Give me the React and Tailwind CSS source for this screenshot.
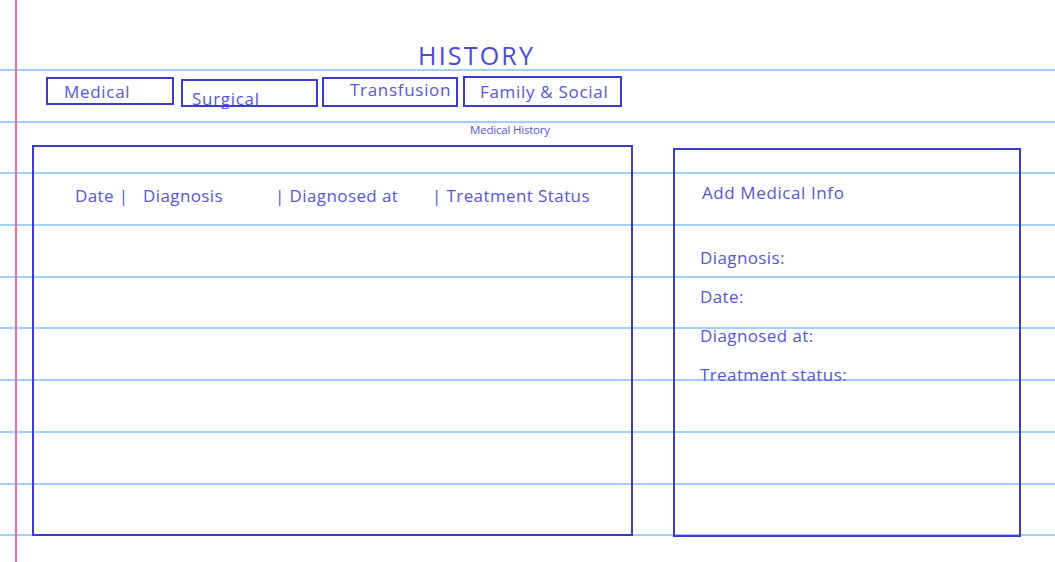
const tabs = [
  { label: "Medical", box: "ml-[46px] mt-[1px] w-[128px] h-[28px]", text: "pl-[16px] pt-[2px]" },
  { label: "Surgical", box: "ml-[7px] mt-[3px] w-[137px] h-[28px]", text: "pl-[9px] pt-[7px]" },
  { label: "Transfusion", box: "ml-[4px] mt-[1px] w-[136px] h-[30px]", text: "pl-[26px] pt-0" },
  { label: "Family & Social", box: "ml-[5px] mt-0 w-[159px] h-[31px]", text: "pl-[15px] pt-[3px]" },
];

const fields = ["Diagnosis:", "Date:", "Diagnosed at:", "Treatment status:"];

function RuledPaper() {
  // notebook lines behind the page content
  return (
    <div className="absolute inset-0 pointer-events-none">
      <div className="flex flex-col pt-[69px]">
        {Array.from({ length: 10 }).map((_, i) => (
          <div key={i} className="h-[51.7px] border-t-2 border-[#9fd0ff]" />
        ))}
      </div>
      <div className="absolute top-0 bottom-0 left-[15px] w-[2px] bg-[#ff5fa8]" />
    </div>
  );
}

export default function App() {
  return (
    <div className="relative w-full h-[562px] overflow-hidden bg-white text-[#5656d6] font-['Open_Sans',sans-serif]">
      <RuledPaper />

      <div className="relative flex flex-col">
        {/* title */}
        <h1 className="pt-[39px] pl-[418px] text-[25px] leading-[32px] tracking-[2.2px] text-[#4a4ad4]">
          HISTORY
        </h1>

        {/* tabs */}
        <div className="flex items-start mt-[5px]">
          {tabs.map((t) => (
            <div
              key={t.label}
              className={`${t.box} border-2 border-[#3b3bd2] overflow-visible`}
            >
              <div className={`${t.text} text-[17px] leading-[22px] tracking-[0.7px] whitespace-nowrap`}>
                {t.label}
              </div>
            </div>
          ))}
        </div>

        <p className="mt-[16px] pl-[470px] text-[11.5px] leading-[14px] tracking-[-0.2px]">
          Medical History
        </p>

        {/* main area */}
        <div className="flex items-start mt-[8px] ml-[32px]">
          <div className="w-[601px] h-[391px] border-2 border-[#3b3bd2]">
            <div className="flex pt-[37px] pl-[41px] text-[17px] leading-[24px] tracking-[0.4px] whitespace-nowrap">
              <span className="w-[68px]">Date |</span>
              <span className="w-[132px]">Diagnosis</span>
              <span className="w-[157px]">| Diagnosed at</span>
              <span>| Treatment Status</span>
            </div>
          </div>

          <div className="ml-[40px] mt-[3px] w-[348px] h-[389px] border-2 border-[#3b3bd2]">
            <div className="pt-[31px] pl-[27px] text-[17px] leading-[24px] tracking-[0.6px]">
              Add Medical Info
            </div>
            <div className="flex flex-col gap-[15px] mt-[41px] pl-[25px] text-[17px] leading-[24px] tracking-[0.4px]">
              {fields.map((f) => (
                <div key={f}>{f}</div>
              ))}
            </div>
          </div>
        </div>
      </div>
    </div>
  );
}
